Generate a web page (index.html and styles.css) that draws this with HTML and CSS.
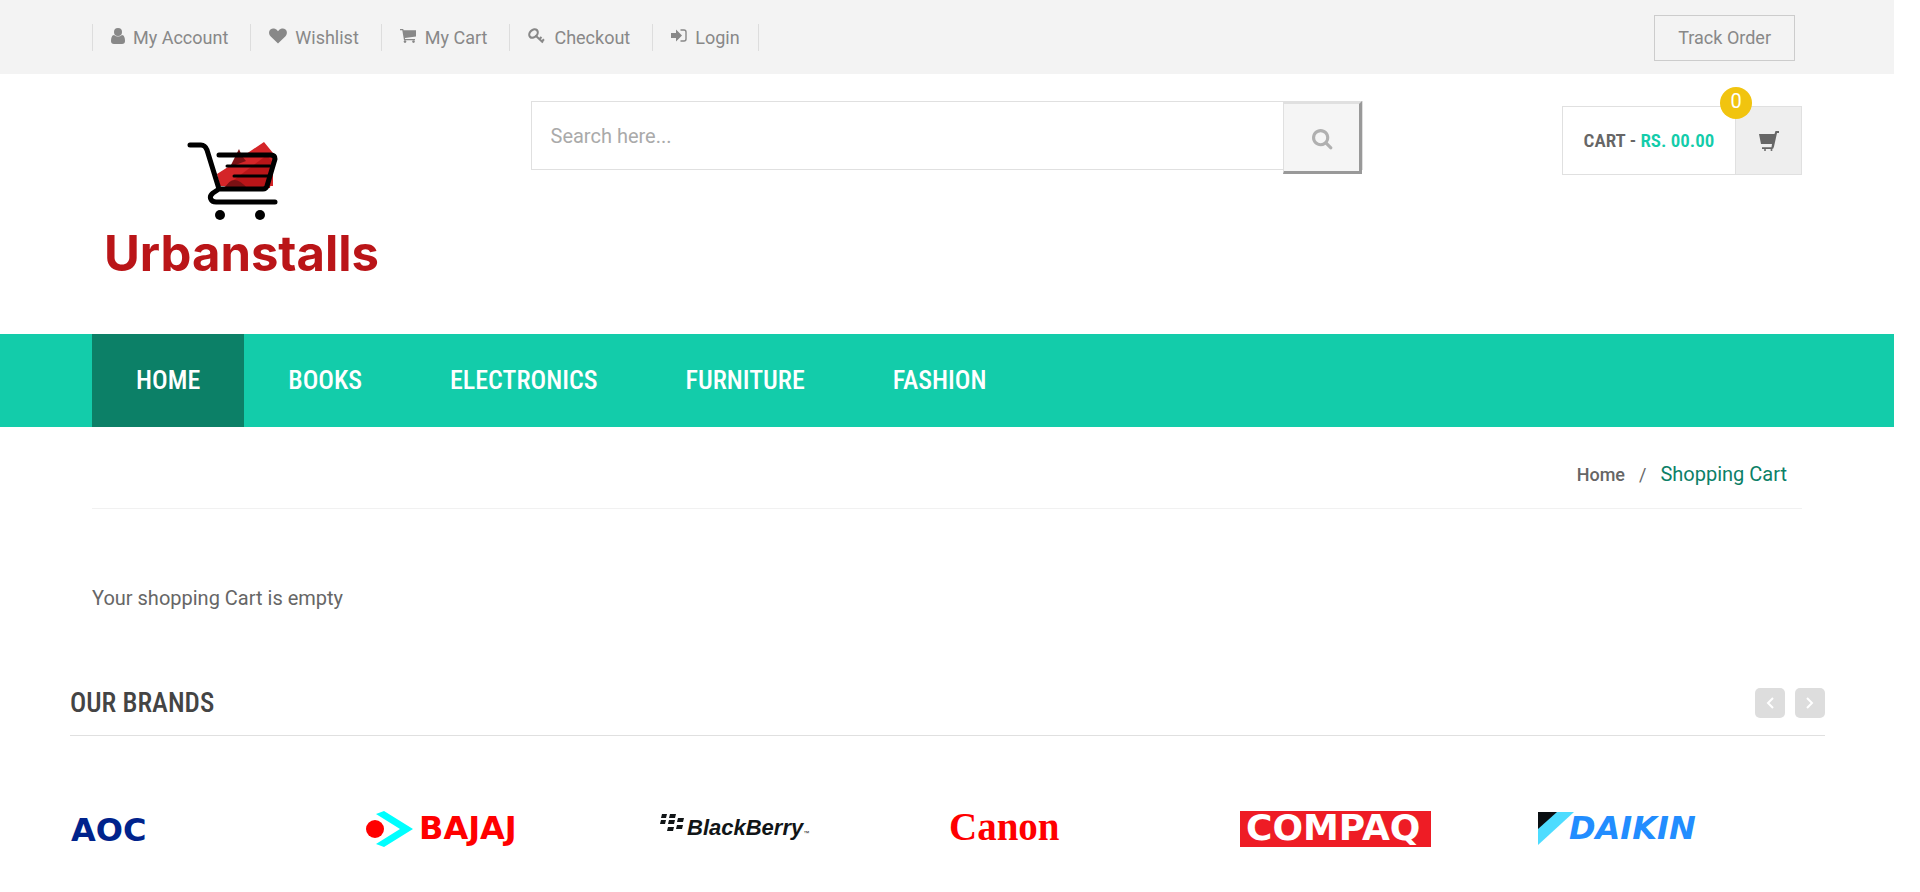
FILE: index.html
```html
<!DOCTYPE html>
<html lang="en">
<head>
<meta charset="utf-8">
<title>Shopping Cart</title>
<link rel="stylesheet" href="styles.css">
</head>
<body>
<header>
  <div class="topbar">
    <div class="container topbar-row">
      <ul class="account-links">
        <li><a href="#"><svg width="14" height="16" viewBox="0 0 14 16"><circle cx="7" cy="4" r="4"/><path d="M3 7C1 7 0 10 0 13q0 3 3 3h8q3 0 3-3c0-3-1-6-3-6q-4 3-8 0z"/></svg>My Account</a></li>
        <li><a href="#"><svg width="18" height="16" viewBox="0 0 18 16"><path d="M9 15.500L1.500 8.200C-2 4 1.500-1 6 .8Q8 1.700 9 3.300 10 1.700 12 .8C16.500-1 20 4 16.500 8.200z"/></svg>Wishlist</a></li>
        <li><a href="#"><svg width="17" height="16" viewBox="0 0 17 16"><path d="M0 1h3.200l.4 1.200H16v6.300L5 10v1h10v1.200H4L2.300 2.300H0z"/><circle cx="5" cy="13.600" r="1.300"/><circle cx="13.500" cy="13.600" r="1.300"/></svg>My Cart</a></li>
        <li><a href="#"><svg width="18" height="16" viewBox="0 0 18 16"><ellipse cx="5.500" cy="5.500" rx="4.800" ry="3.600" transform="rotate(-45 5.500 5.500)" fill="none" stroke="currentColor" stroke-width="2.200"/><path d="M7.500 7.500l7.500 7M11.500 11l2-2M14 13.300l2-2" fill="none" stroke="currentColor" stroke-width="2"/></svg>Checkout</a></li>
        <li><a href="#"><svg width="16" height="16" viewBox="0 0 16 16"><path d="M0 5h5V1.500L11 7.500l-6 6V10H0z"/><path d="M9.500 2H13q2 0 2 2v7q0 2-2 2H9.500" fill="none" stroke="currentColor" stroke-width="1.400"/></svg>Login</a></li>
      </ul>
      <a class="track" href="#">Track Order</a>
    </div>
  </div>
  <div class="container masthead">
    <a class="logo" href="#" aria-label="Urbanstalls">
      <svg width="320" height="170" viewBox="0 0 320 170">
        <path d="M57 54l22-14 4-4 9-6 12-8 9 11v33H60z" fill="#d42528"/>
        <path d="M79 29l3 7 4 5-16 6z" fill="#7d1114"/>
        <path d="M63 68L107 35l6 8-3 25z" fill="#b91518"/>
        <path d="M65 68q8-16 22 0z" fill="#7a1013"/>
        <g fill="none" stroke="#000" stroke-linecap="round" stroke-linejoin="round">
          <path d="M30 25h11q4 0 6 5l12 39h44q3 0 4-3l8-27q0-4-4-4H59M59 69l-6 4c-5 4-2 9 3 9h59" stroke-width="5"/>
          <path d="M67 46h43M74 56h35" stroke-width="3"/>
        </g>
        <circle cx="60" cy="95" r="5" fill="#000"/><circle cx="100" cy="95" r="5" fill="#000"/>
        <text x="-56" y="151" class="logo-word">Urbanstalls</text>
      </svg>
    </a>
    <form class="search">
      <input type="text" placeholder="Search here..." aria-label="Search">
      <button type="button" aria-label="Search"><svg width="22" height="22" viewBox="0 0 1792 1792"><path d="M1152 704q0-185-131.500-316.500t-316.500-131.500-316.500 131.500-131.500 316.500 131.500 316.500 316.500 131.500 316.500-131.500 131.500-316.500zm512 832q0 52-38 90t-90 38q-54 0-90-38l-343-342q-179 124-399 124-143 0-273.500-55.500t-225-150-150-225-55.500-273.500 55.500-273.500 150-225 225-150 273.500-55.500 273.500 55.500 225 150 150 225 55.500 273.500q0 220-124 399l343 343q37 37 37 90z"/></svg></button>
    </form>
    <a class="cart" href="#">
      <span class="cart-total">CART - <b>RS. 00.00</b></span>
      <span class="cart-icon"><svg width="20" height="20" viewBox="0 0 20 20"><path d="M0 3h15.500L16.500 0H20v2h-2l-3 13.500q-.5 2.500-2 2.500H3v-1.800h9.500L13 13H2z"/><circle cx="6" cy="19" r="1"/><circle cx="12.500" cy="19" r="1"/></svg></span>
      <span class="badge">0</span>
    </a>
  </div>
  <nav class="mainnav">
    <ul class="container">
      <li><a class="active" href="#">HOME</a></li>
      <li><a href="#">BOOKS</a></li>
      <li><a href="#">ELECTRONICS</a></li>
      <li><a href="#">FURNITURE</a></li>
      <li><a href="#">FASHION</a></li>
    </ul>
  </nav>
</header>
<main>
  <div class="container">
    <div class="breadcrumb"><a href="#">Home</a><span>/</span><span class="current">Shopping Cart</span></div>
    <p class="empty">Your shopping Cart is empty</p>
  </div>
  <section class="brands">
    <div class="brands-head">
      <h2>OUR BRANDS</h2>
      <div class="arrows">
        <button type="button" aria-label="Previous"><svg width="8" height="12" viewBox="0 0 8 12"><path d="M7 1L2 6l5 5"/></svg></button>
        <button type="button" aria-label="Next"><svg width="8" height="12" viewBox="0 0 8 12"><path d="M1 1l5 5-5 5"/></svg></button>
      </div>
    </div>
    <div class="brand-list">
      <svg width="191" height="36" viewBox="0 0 191 36"><text class="aoc" x="1" y="30">AOC</text></svg>
      <svg width="191" height="36" viewBox="0 0 191 36"><circle cx="12" cy="18" r="9" fill="#f00"/><path d="M13 3l8-3 29 18-29 18-8-3 24-15z" fill="#0ff"/><text class="bajaj" x="56" y="28">BAJAJ</text></svg>
      <svg width="191" height="36" viewBox="0 0 191 36"><path fill="#111517" d="M7 3h5l-1 4H6zM15 3h6l-1 4h-6zM6 9h5l-1 4H5zM14 9h6l-1 4h-6zM23 7h6l-1 4h-6zM22 14h6l-1 4h-6zM13 16h6l-1 4h-6z"/><text class="blackberry" x="32" y="24">BlackBerry<tspan class="tm">™</tspan></text></svg>
      <svg width="191" height="36" viewBox="0 0 191 36"><text class="canon" x="1" y="29">Canon</text></svg>
      <svg width="191" height="36" viewBox="0 0 191 36"><path fill="#ee1c25" d="M0 0h191v36H0z"/><text class="compaq" x="6" y="29">COMPAQ</text></svg>
      <svg width="191" height="36" viewBox="0 0 191 36"><path d="M5 1h36L5 34z" fill="#4ddcff"/><path d="M5 1h19L5 18z" fill="#0a0f12"/><text class="daikin" x="36" y="28">DAIKIN</text></svg>
    </div>
  </section>
</main>
</body>
</html>
```
FILE: styles.css
```css
* { box-sizing: border-box; }
body {
  margin: 0;
  padding-right: 26px;
  background: #fff;
  color: #666;
  font: 20px/28px Roboto, sans-serif;
  overflow-x: hidden;
}
a { color: inherit; text-decoration: none; }
ul { list-style: none; margin: 0; padding: 0; }
svg { fill: currentColor; flex: none; overflow: visible; }
.container { margin: 0 92px; }

.topbar { background: #f3f3f3; color: #888; font-size: 18px; }
.topbar-row { display: flex; align-items: center; justify-content: space-between; height: 74px; }
.account-links { display: flex; }
.account-links li { border-left: 1px solid #ddd; padding: 0 22px 0 18px; }
.account-links li:last-child { border-right: 1px solid #ddd; padding-right: 18px; }
.account-links a { display: flex; gap: 8px; line-height: 27px; }
.account-links svg { margin-top: 4px; }
.track { border: 1px solid #ccc; line-height: 44px; padding: 0 23px; margin: 2px 7px 0 0; }

.masthead { display: flex; justify-content: space-between; align-items: flex-start; height: 260px; }
.logo { width: 320px; margin-top: 46px; }
.logo svg { display: block; margin-left: 68px; }
.logo-word { font: 700 49px Inter, sans-serif; fill: #ba1518; }
.search { display: flex; width: 832px; height: 69px; margin: 27px 81px 0 0; border: 1px solid #e0e0e0; }
.search input { flex: 1; min-width: 0; border: 0; padding: 0 19px; background: #fff; font: 20px Roboto, sans-serif; color: #666; }
.search input::placeholder { color: #aaa; opacity: 1; }
.search button { width: 79px; height: 73px; margin-top: -1px; padding: 4px 0 0 4px; border: 3px solid #999; border-top-color: #e0e0e0; border-left: 1px solid #e0e0e0; background: #f5f5f5; color: #b0b0b0; }
.search svg { vertical-align: middle; }
.cart { position: relative; display: flex; height: 69px; margin-top: 32px; border: 1px solid #e0e0e0; font: 600 19px/67px "Roboto Condensed", "Liberation Sans Narrow", Roboto, sans-serif; }
.cart-total { width: 172px; text-align: center; white-space: nowrap; }
.cart-total b { font-weight: 600; color: #13ccaa; }
.cart-icon { display: flex; align-items: center; justify-content: center; width: 66px; border-left: 1px solid #e0e0e0; background: #eee; }
.badge { position: absolute; top: -20px; right: 49px; width: 32px; height: 32px; border-radius: 50%; background: #f1c40f; color: #fff; font: 20px/29px Roboto, sans-serif; text-align: center; }

.mainnav { background: #13ccaa; }
.mainnav ul { display: flex; }
.mainnav a { display: block; padding: 0 44px; color: #fff; font: 500 26px/93px "Roboto Condensed", "Liberation Sans Narrow", Roboto, sans-serif; }
.mainnav .active { background: #0c8067; }

.breadcrumb { display: flex; justify-content: flex-end; align-items: baseline; gap: 14px; padding: 33px 15px 19px; border-bottom: 1px solid #f1f1f1; font-size: 18px; }
.breadcrumb a { font-weight: 500; }
.breadcrumb .current { font-size: 20px; color: #0c8067; }
.empty { margin: 75px 0 0; }

.brands { margin: 62px 69px 0 70px; }
.brands-head { display: flex; justify-content: space-between; align-items: center; padding-bottom: 3px; border-bottom: 1px solid #e0e0e0; }
.brands h2 { margin: 0; color: #444; font: 500 27px/58px "Roboto Condensed", "Liberation Sans Narrow", Roboto, sans-serif; }
.arrows { display: flex; gap: 10px; }
.arrows button { display: flex; align-items: center; justify-content: center; width: 30px; height: 30px; padding: 0; border: 0; border-radius: 5px; background: #ddd; }
.arrows path { fill: none; stroke: #fff; stroke-width: 2; }
.brand-list { display: grid; grid-template-columns: repeat(6, 1fr); padding: 75px 0 45px; }
.aoc { font: 700 32px "DejaVu Sans", sans-serif; fill: #00238c; }
.bajaj { font: 700 32px "DejaVu Sans", sans-serif; fill: #f00; }
.blackberry { font: italic 700 22px "Liberation Sans", sans-serif; fill: #111517; }
.tm { font: 6px "Liberation Sans", sans-serif; }
.canon { font: 700 39px "Liberation Serif", serif; fill: #f00; }
.compaq { font: 700 36px "DejaVu Sans", sans-serif; fill: #fff; }
.daikin { font: italic 700 32px "DejaVu Sans", sans-serif; fill: #228dff; }
```
